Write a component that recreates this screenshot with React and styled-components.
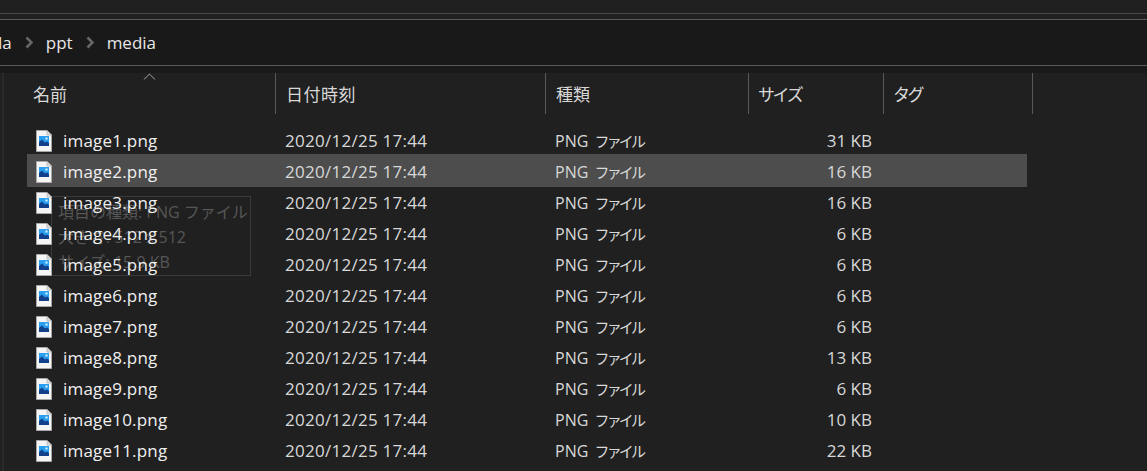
import React from 'react';
import styled, { createGlobalStyle } from 'styled-components';

const GlobalStyle = createGlobalStyle`
  html, body {
    margin: 0;
    padding: 0;
    background: #202020;
    overflow: hidden;
  }
`;

const files = [
  { name: 'image1.png', size: '31 KB' },
  { name: 'image2.png', size: '16 KB', selected: true },
  { name: 'image3.png', size: '16 KB' },
  { name: 'image4.png', size: '6 KB' },
  { name: 'image5.png', size: '6 KB' },
  { name: 'image6.png', size: '6 KB' },
  { name: 'image7.png', size: '6 KB' },
  { name: 'image8.png', size: '13 KB' },
  { name: 'image9.png', size: '6 KB' },
  { name: 'image10.png', size: '10 KB' },
  { name: 'image11.png', size: '22 KB' },
  { name: '', size: '' },
];

const columns = [
  { label: '名前', width: 249, pad: 6, spacing: 0, sorted: true },
  { label: '日付時刻', width: 270, pad: 10, spacing: 0.5 },
  { label: '種類', width: 203, pad: 10, spacing: 0 },
  { label: 'サイズ', width: 135, pad: 9, spacing: -2.4 },
  { label: 'タグ', width: 149, pad: 9, spacing: -2.4 },
];

const FileIcon = () => (
  <svg width="16" height="22" viewBox="0 0 16 22">
    <path d="M0.5 0.5H11L15.5 5V21.5H0.5Z" fill="#f5f5f5" stroke="#a8a8a8" />
    <path d="M11 0.5V5H15.5" fill="#dcdcdc" stroke="#bdbdbd" />
    <rect x="3" y="6" width="10" height="10" fill="#2a9ff0" />
    <path d="M3 16V12L6 9.5L9 12.5L11 11.5L13 13V16Z" fill="#12408a" />
    <rect x="9.5" y="7.5" width="2" height="2" fill="#e8f6ff" />
  </svg>
);

const Chevron = () => (
  <ChevronIcon width="8" height="13" viewBox="0 0 8 13">
    <polyline points="1.5,1.5 6.5,6.5 1.5,11.5" fill="none" stroke="#676767" strokeWidth="2.6" />
  </ChevronIcon>
);

const App = () => (
  <Page>
    <GlobalStyle />
    <Ribbon />
    <AddressBar>
      <Crumb $clipped>la</Crumb>
      <Chevron />
      <Crumb>ppt</Crumb>
      <Chevron />
      <Crumb>media</Crumb>
    </AddressBar>
    <Gutter />
    <ListArea>
      <HeaderRow>
        {columns.map(col => (
          <HeaderCell key={col.label} $width={col.width} $pad={col.pad} $spacing={col.spacing}>
            {col.sorted && <SortArrow />}
            {col.label}
          </HeaderCell>
        ))}
      </HeaderRow>
      <Rows>
        {files.map((file, i) => (
          <Row key={i} $selected={file.selected}>
            <NameCell>
              <FileIcon />
              <span>{file.name}</span>
            </NameCell>
            {file.name && (
              <>
                <DateCell>2020/12/25 17:44</DateCell>
                <TypeCell>PNG <Kana>ファイル</Kana></TypeCell>
                <SizeCell>{file.size}</SizeCell>
              </>
            )}
          </Row>
        ))}
        <Tooltip>
          <div>項目の種類: PNG ファイル</div>
          <div>大きさ: 512 x 512</div>
          <div>サイズ: 15.9 KB</div>
        </Tooltip>
      </Rows>
    </ListArea>
  </Page>
);

const Page = styled.div`
  width: 1147px;
  height: 471px;
  overflow: hidden;
  background: #202020;
  font-family: "Noto Sans CJK JP", "Noto Sans", sans-serif;
`;

const Ribbon = styled.div`
  height: 13px;
  margin-bottom: 5px;
  border-bottom: 1px solid #4a4a4a;
`;

const AddressBar = styled.div`
  height: 45px;
  display: flex;
  align-items: center;
  gap: 13px;
  background: #191919;
  border-top: 1px solid #5a5a5a;
  border-bottom: 1px solid #5a5a5a;
  color: #e6e6e6;
  font-family: "Open Sans", "Noto Sans", sans-serif;
  font-size: 17px;
`;

const Crumb = styled.span`
  margin-left: ${props => (props.$clipped ? '-2px' : '0')};
`;

const ChevronIcon = styled.svg`
  flex-shrink: 0;
`;

const Gutter = styled.div`
  height: 7px;
  background: #1a1a1a;
`;

const ListArea = styled.div`
  margin-left: 2px;
  border-left: 2px solid #2a2a2a;
  height: 400px;
`;

const HeaderRow = styled.div`
  display: flex;
  height: 41px;
  padding-left: 23px;
`;

const HeaderCell = styled.div`
  position: relative;
  box-sizing: border-box;
  width: ${props => props.$width}px;
  padding-left: ${props => props.$pad}px;
  display: flex;
  align-items: center;
  border-right: 1px solid #595959;
  color: #d8d8d8;
  font-size: 17px;
  letter-spacing: ${props => props.$spacing}px;
`;

const SortArrow = styled.i`
  position: absolute;
  top: 2px;
  left: 118px;
  width: 8px;
  height: 8px;
  border-top: 1px solid #b0b0b0;
  border-left: 1px solid #b0b0b0;
  transform: rotate(45deg);
  clip-path: polygon(0 0, 100% 0, 0 100%);
`;

const Rows = styled.div`
  position: relative;
  margin-top: 9px;
`;

const Row = styled.div`
  position: relative;
  z-index: 1;
  display: flex;
  align-items: center;
  width: 1000px;
  height: 33px;
  margin-left: 23px;
  margin-bottom: -2px;
  padding-top: 2px;
  box-sizing: border-box;
  background: ${props => (props.$selected ? '#4d4d4d' : 'transparent')};
  color: #d8d8d8;
  font-family: "Open Sans", "Noto Sans CJK JP", sans-serif;
  font-size: 17px;
`;

const NameCell = styled.div`
  width: 258px;
  padding-left: 9px;
  box-sizing: border-box;
  display: flex;
  align-items: center;
  gap: 11px;
  flex-shrink: 0;
  color: #f0f0f0;
  letter-spacing: 0.2px;
`;

const DateCell = styled.div`
  width: 270px;
  flex-shrink: 0;
  letter-spacing: 0.27px;
`;

const TypeCell = styled.div`
  width: 203px;
  flex-shrink: 0;
  font-size: 16px;
`;

const Kana = styled.span`
  margin-left: 2px;
  font-family: "Noto Sans CJK JP", sans-serif;
  font-size: 15px;
  letter-spacing: -2.8px;
`;

const SizeCell = styled.div`
  width: 114px;
  flex-shrink: 0;
  text-align: right;
`;

const Tooltip = styled.div`
  position: absolute;
  z-index: 0;
  left: 47px;
  top: 73px;
  width: 200px;
  height: 80px;
  box-sizing: border-box;
  padding: 3px 6px;
  border: 1px solid #3a3a3a;
  color: #565656;
  font-family: "Open Sans", "Noto Sans CJK JP", sans-serif;
  font-size: 16px;
  line-height: 25px;
  white-space: nowrap;
`;

export default App;
